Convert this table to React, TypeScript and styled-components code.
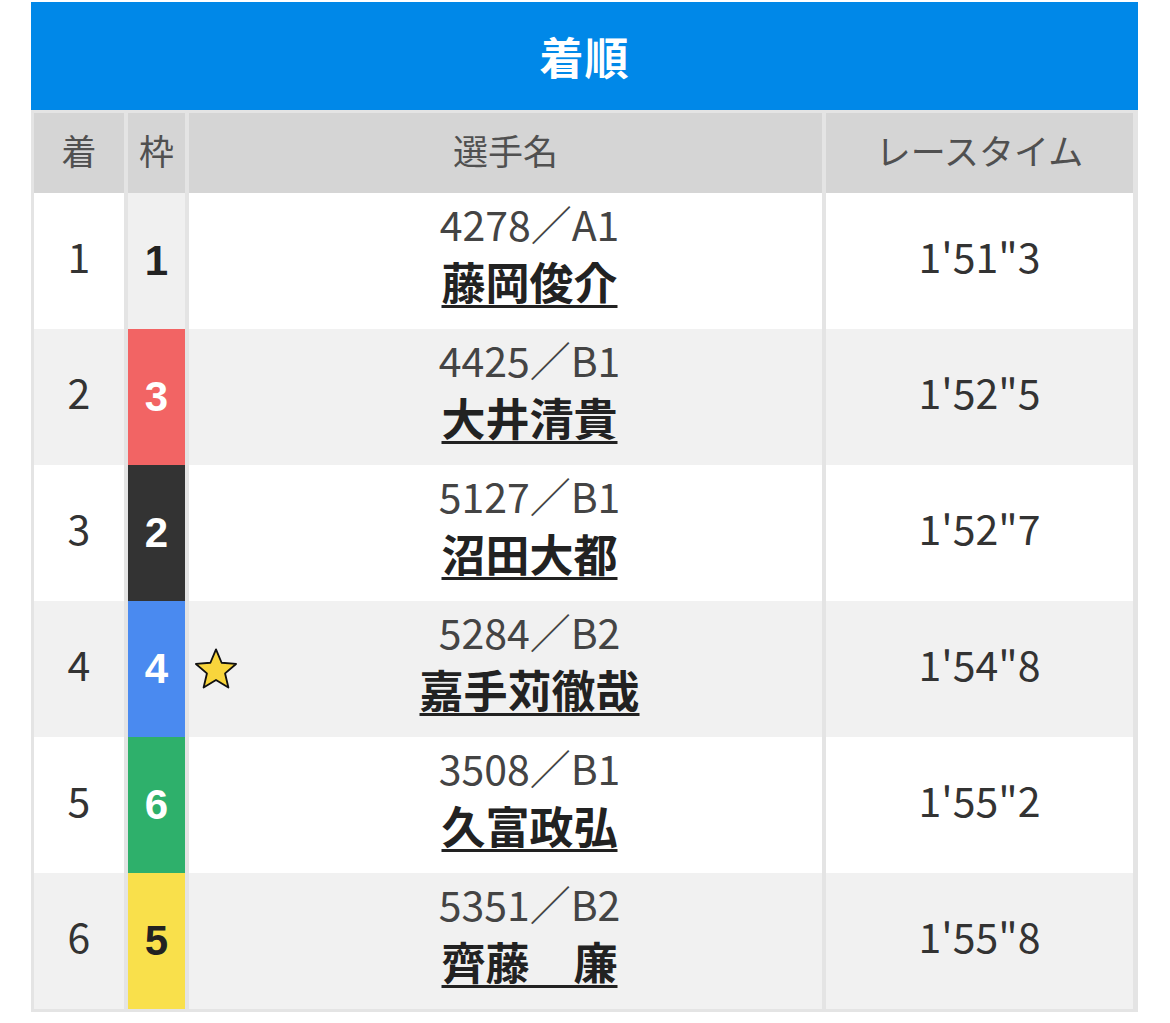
import styled, { createGlobalStyle } from "styled-components"

const GlobalStyle = createGlobalStyle`
    body {
        margin: 0;
        background: #fff;
        font-family: "Noto Sans CJK JP", "Noto Sans", sans-serif;
    }
`

type Result = {
    rank: number
    frame: number
    id: string
    name: string
    time: string
    star?: boolean
}

const results: Result[] = [
    { rank: 1, frame: 1, id: "4278／A1", name: "藤岡俊介", time: "1'51\"3" },
    { rank: 2, frame: 3, id: "4425／B1", name: "大井清貴", time: "1'52\"5" },
    { rank: 3, frame: 2, id: "5127／B1", name: "沼田大都", time: "1'52\"7" },
    { rank: 4, frame: 4, id: "5284／B2", name: "嘉手苅徹哉", time: "1'54\"8", star: true },
    { rank: 5, frame: 6, id: "3508／B1", name: "久富政弘", time: "1'55\"2" },
    { rank: 6, frame: 5, id: "5351／B2", name: "齊藤　廉", time: "1'55\"8" },
]

const frameColors: Record<number, { bg: string; fg: string }> = {
    1: { bg: "#f0f0f0", fg: "#222" },
    2: { bg: "#333333", fg: "#fff" },
    3: { bg: "#f26464", fg: "#fff" },
    4: { bg: "#4a8af0", fg: "#fff" },
    5: { bg: "#f9e04b", fg: "#222" },
    6: { bg: "#2eb06b", fg: "#fff" },
}

const Star = () => (
    <StarIcon width="44" height="44" viewBox="0 0 24 24">
        <path
            d="M12 1.3L15.06 8.59 22.94 9.25 16.95 14.41 18.76 22.1 12 18 5.24 22.1 7.05 14.41 1.06 9.25 8.94 8.59Z"
            fill="#f8d53c"
            stroke="#111"
            strokeWidth="1"
            strokeLinejoin="round"
        />
    </StarIcon>
)

const App = () => {
    return (
        <Page>
            <GlobalStyle />
            <Title>着順</Title>
            <Table>
                <HeadRow>
                    <HeadCell>着</HeadCell>
                    <HeadCell>枠</HeadCell>
                    <HeadCell>選手名</HeadCell>
                    <HeadCell>レースタイム</HeadCell>
                </HeadRow>
                {results.map((r, i) => (
                    <Row key={r.rank} $alt={i % 2 === 1}>
                        <Cell>{r.rank}</Cell>
                        <FrameCell $bg={frameColors[r.frame].bg} $fg={frameColors[r.frame].fg}>
                            {r.frame}
                        </FrameCell>
                        <PlayerCell>
                            <StarSlot>{r.star && <Star />}</StarSlot>
                            <Player>
                                <PlayerId>{r.id}</PlayerId>
                                <PlayerName href="#">{r.name}</PlayerName>
                            </Player>
                        </PlayerCell>
                        <Cell>{r.time}</Cell>
                    </Row>
                ))}
            </Table>
        </Page>
    )
}

export default App

const Page = styled.div`
    width: 1107px;
    padding: 2px 0 0 31px;
`

const Title = styled.div`
    height: 108px;
    background: #0088e8;
    color: #fff;
    font-size: 44px;
    font-weight: 700;
    display: flex;
    align-items: center;
    justify-content: center;
    letter-spacing: 1px;
`

const Table = styled.div`
    border: 3px solid #e4e4e4;
    background: #e4e4e4;
`

const columns = "90px 57px 633px 307px"

const HeadRow = styled.div`
    display: grid;
    grid-template-columns: ${columns};
    column-gap: 4px;
    height: 80px;
`

const HeadCell = styled.div`
    background: #d5d5d5;
    color: #505050;
    font-size: 35px;
    padding-bottom: 7px;
    display: flex;
    align-items: center;
    justify-content: center;
`

const Row = styled.div<{ $alt: boolean }>`
    display: grid;
    grid-template-columns: ${columns};
    column-gap: 4px;
    height: 136px;
    & > div:not(:nth-child(2)) {
        background: ${(p) => (p.$alt ? "#f1f1f1" : "#fff")};
    }
`

const Cell = styled.div`
    color: #333;
    font-size: 41px;
    padding-bottom: 12px;
    display: flex;
    align-items: center;
    justify-content: center;
`

const FrameCell = styled.div<{ $bg: string; $fg: string }>`
    background: ${(p) => p.$bg};
    color: ${(p) => p.$fg};
    font-family: "Liberation Sans", Arial, sans-serif;
    font-weight: 700;
    font-size: 42px;
    display: flex;
    align-items: center;
    justify-content: center;
`

const PlayerCell = styled.div`
    display: flex;
    align-items: center;
`

const StarSlot = styled.div`
    width: 48px;
    padding-left: 5px;
    box-sizing: border-box;
    display: flex;
    align-items: center;
    overflow: visible;
`

const StarIcon = styled.svg`
    flex: none;
`

const Player = styled.div`
    flex: 1;
    display: flex;
    flex-direction: column;
    align-items: center;
    line-height: 58px;
    padding-bottom: 18px;
`

const PlayerId = styled.div`
    color: #444;
    font-size: 41px;
`

const PlayerName = styled.a`
    color: #222;
    font-size: 44px;
    font-weight: 700;
    text-decoration: underline;
    text-decoration-thickness: 3px;
    text-underline-offset: 5px;
`
